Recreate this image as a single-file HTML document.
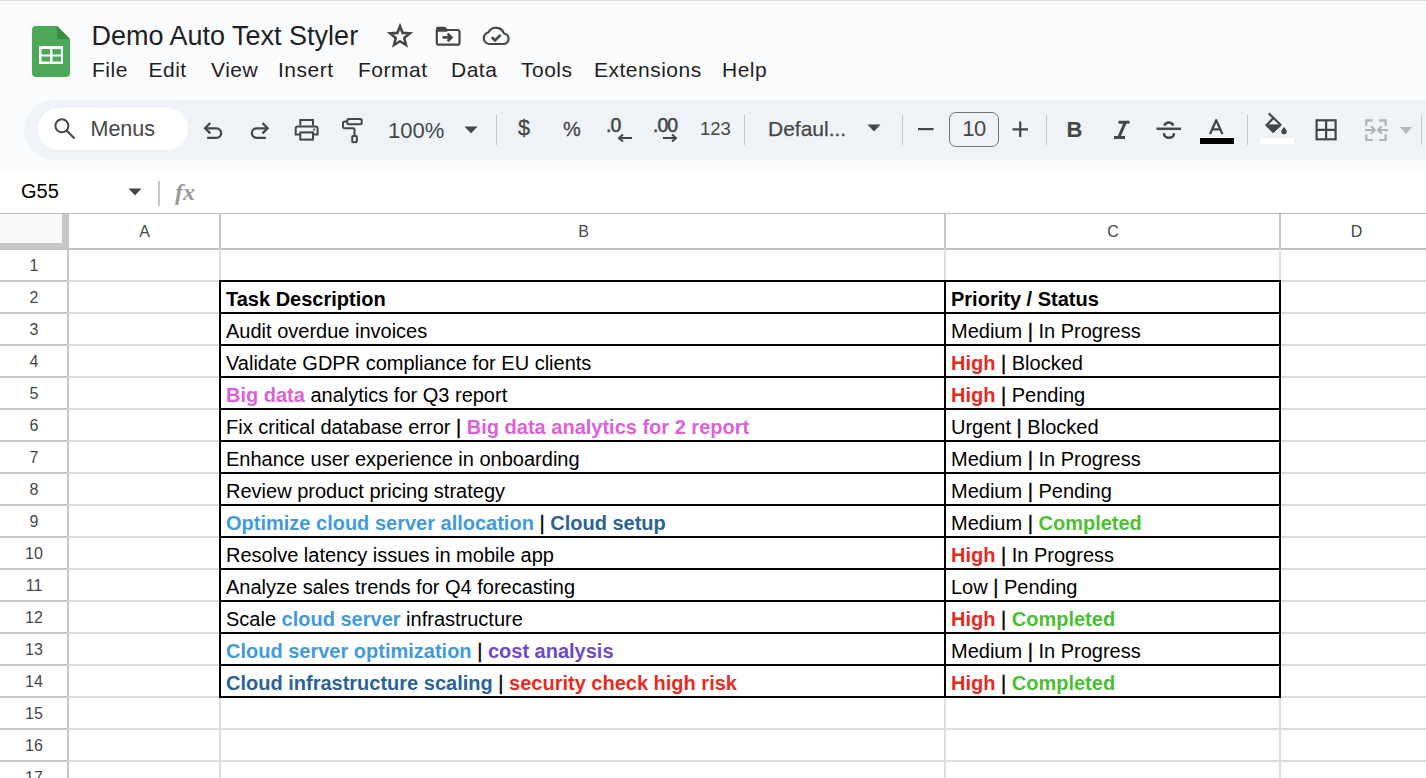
<!DOCTYPE html>
<html><head><meta charset="utf-8">
<style>
*{margin:0;padding:0;box-sizing:border-box}
html,body{width:1426px;height:778px;overflow:hidden;background:#fff;font-family:"Liberation Sans",sans-serif;position:relative}
.abs{position:absolute}
#top{position:absolute;left:0;top:0;width:1426px;height:172px;background:#f9fbfd}
#topline{position:absolute;left:0;top:0;width:1426px;height:1px;background:#dcdedb;box-shadow:0 1px 0 #fff}
.title{position:absolute;left:91.5px;top:20px;font-size:27px;color:#1f1f1f;white-space:nowrap;line-height:32px}
.menu{position:absolute;top:58px;font-size:21px;letter-spacing:0.5px;color:#1f1f1f;white-space:nowrap;line-height:24px}
#tb{position:absolute;left:24px;top:100px;width:1440px;height:60px;background:#eff3f8;border-radius:30px}
#search{position:absolute;left:38px;top:108px;width:150px;height:42px;background:#fff;border-radius:21px}
.tt{position:absolute;font-size:21px;color:#444746;white-space:nowrap;line-height:24px}
.sep{position:absolute;top:115px;width:1px;height:30px;background:#c7c7c7}
svg{position:absolute;overflow:visible}
#fbar{position:absolute;left:0;top:172px;width:1426px;height:41px;background:#fff}
.hdr{position:absolute;top:213px;height:36px;background:#fff}
.hl{position:absolute;left:68px;width:1358px;height:2px;background:#dedede}
.vl{position:absolute;top:249px;width:2px;height:529px;background:#dedede}
.rn{position:absolute;left:0;width:68px;height:32px;line-height:34px;text-align:center;font-size:16px;color:#444746}
.ct{position:absolute;height:32px;line-height:36px;font-size:20px;color:#000;white-space:nowrap}
.ct b{font-weight:bold}
.pp{-webkit-text-stroke:0.35px #000}
.r{color:#e62b23}.p{color:#da62d8}.lb{color:#439ad8}.db{color:#2c6394}.pu{color:#6c4cc2}.g{color:#4cbe34}
.ch{position:absolute;top:213px;height:36px;line-height:38px;text-align:center;font-size:16px;color:#444746}
</style></head><body>
<div id="top"></div>
<div id="topline"></div>

<!-- sheets logo -->
<svg style="left:32px;top:26px" width="38" height="51" viewBox="0 0 38 51">
  <path d="M4 0 H25 L38 13 V47 A4 4 0 0 1 34 51 H4 A4 4 0 0 1 0 47 V4 A4 4 0 0 1 4 0Z" fill="#4ea859"/>
  <path d="M25 0 L38 13 H25Z" fill="#3b8a3f"/>
  <rect x="7" y="20" width="24" height="18" fill="#fff"/>
  <rect x="9.5" y="23" width="8.5" height="5.5" fill="#4ea859"/>
  <rect x="20.5" y="23" width="8.5" height="5.5" fill="#4ea859"/>
  <rect x="9.5" y="30.5" width="8.5" height="5" fill="#4ea859"/>
  <rect x="20.5" y="30.5" width="8.5" height="5" fill="#4ea859"/>
</svg>

<div class="title">Demo Auto Text Styler</div>

<!-- star -->
<svg style="left:388px;top:24px" width="24" height="23" viewBox="0 0 24 23">
  <path d="M12 2.3 L14.6 8.9 L21.8 9.4 L16.3 14 L18 21 L12 17.2 L6 21 L7.7 14 L2.2 9.4 L9.4 8.9 Z" fill="none" stroke="#444746" stroke-width="2.6" stroke-linejoin="miter"/>
</svg>
<!-- folder move -->
<svg style="left:435px;top:26px" width="26" height="20" viewBox="0 0 26 20">
  <path d="M1.8 4 A2 2 0 0 1 3.8 2 H9.5 L11.5 4 H22.5 A2 2 0 0 1 24.5 6 V16.7 A2 2 0 0 1 22.5 18.7 H3.8 A2 2 0 0 1 1.8 16.7 Z" fill="none" stroke="#444746" stroke-width="2.2"/>
  <path d="M1 3 A2 2 0 0 1 3 0.8 H9.8 L12.3 3.2 V5.8 H1Z" fill="#444746"/>
  <path d="M7.5 11.4 H16 M12.6 7.6 L16.4 11.4 L12.6 15.2" fill="none" stroke="#444746" stroke-width="2.7"/>
</svg>
<!-- cloud check -->
<svg style="left:482px;top:26px" width="28" height="19" viewBox="0 0 28 19">
  <path d="M7 18 A6 6 0 0 1 6.5 6.2 A8.5 8.5 0 0 1 22 7.5 A5.3 5.3 0 0 1 22 18 Z" fill="none" stroke="#444746" stroke-width="2.2" stroke-linejoin="round"/>
  <path d="M9.8 11.3 L13 14.4 L18.6 8.8" fill="none" stroke="#444746" stroke-width="2.6"/>
</svg>

<div class="menu" style="left:92px">File</div>
<div class="menu" style="left:148.5px">Edit</div>
<div class="menu" style="left:211px">View</div>
<div class="menu" style="left:278px">Insert</div>
<div class="menu" style="left:358px">Format</div>
<div class="menu" style="left:451px">Data</div>
<div class="menu" style="left:521px">Tools</div>
<div class="menu" style="left:594px">Extensions</div>
<div class="menu" style="left:722px">Help</div>

<!-- toolbar -->
<div id="tb"></div>
<div id="search"></div>
<svg style="left:52px;top:117px" width="24" height="24" viewBox="0 0 24 24">
  <circle cx="9.9" cy="8.8" r="6.5" fill="none" stroke="#444746" stroke-width="2"/>
  <path d="M14.6 13.5 L22.5 21.5" stroke="#444746" stroke-width="2.2"/>
</svg>
<div class="tt" style="left:90.5px;top:117px;font-size:21.5px">Menus</div>

<!-- undo -->
<svg style="left:198px;top:115px" width="80" height="30" viewBox="198 115 80 30">
  <path d="M210.2 123 L205.1 128.2 L210.2 133.4" fill="none" stroke="#444746" stroke-width="2.3"/>
  <path d="M205.3 128.3 H216.4 A4.75 4.75 0 0 1 216.4 137.8 H207.2" fill="none" stroke="#444746" stroke-width="2.3"/>
  <path d="M262.5 123 L267.6 128.2 L262.5 133.4" fill="none" stroke="#444746" stroke-width="2.3"/>
  <path d="M267.4 128.3 H256.6 A4.75 4.75 0 0 0 256.6 137.8 H265.8" fill="none" stroke="#444746" stroke-width="2.3"/>
</svg>
<!-- print -->
<svg style="left:290px;top:115px" width="32" height="30" viewBox="290 115 32 30">
  <path d="M300.3 125.5 V120.1 H313 V125.5" fill="none" stroke="#444746" stroke-width="2"/>
  <path d="M300 134.6 H295.7 V128.4 A2 2 0 0 1 297.7 126.4 H315.6 A2 2 0 0 1 317.6 128.4 V134.6 H313.5" fill="none" stroke="#444746" stroke-width="2"/>
  <rect x="300.3" y="132.4" width="12.7" height="7.2" fill="none" stroke="#444746" stroke-width="2"/>
  <circle cx="314.2" cy="129.6" r="1.1" fill="#444746"/>
</svg>
<!-- paint format -->
<svg style="left:338px;top:115px" width="28" height="32" viewBox="338 115 28 32">
  <rect x="347.3" y="119" width="14.4" height="5.2" rx="1.5" fill="none" stroke="#444746" stroke-width="2"/>
  <path d="M347 121.5 H344.5 A1.5 1.5 0 0 0 343 123 V126.8 A1.5 1.5 0 0 0 344.5 128.3 H353 A1.5 1.5 0 0 1 354.5 129.8 V135" fill="none" stroke="#444746" stroke-width="2"/>
  <rect x="352.2" y="135.9" width="4.6" height="6.4" rx="1" fill="none" stroke="#444746" stroke-width="2"/>
</svg>
<div class="tt" style="left:388px;top:119px;font-size:22px">100%</div>
<svg style="left:464px;top:125.5px" width="14" height="8" viewBox="0 0 14 8"><path d="M0.5 0.5 H13.5 L7 7.5Z" fill="#444746"/></svg>
<div class="sep" style="left:496px"></div>

<div class="tt" style="left:518px;top:116px;font-size:21.5px;-webkit-text-stroke:0.3px #444746">$</div>
<div class="tt" style="left:563px;top:117px;font-size:20px;-webkit-text-stroke:0.3px #444746">%</div>
<div class="tt" style="left:606px;top:113px;font-size:19.5px;letter-spacing:-1px;-webkit-text-stroke:0.5px #444746">.0</div>
<svg style="left:617px;top:133px" width="16" height="10" viewBox="0 0 16 10"><path d="M15 5 H3 M6 1.5 L2 5 L6 8.5" fill="none" stroke="#444746" stroke-width="2"/></svg>
<div class="tt" style="left:653px;top:113px;font-size:19.5px;letter-spacing:-1px;-webkit-text-stroke:0.5px #444746">.00</div>
<svg style="left:662px;top:133px" width="16" height="10" viewBox="0 0 16 10"><path d="M1 5 H13 M10 1.5 L14 5 L10 8.5" fill="none" stroke="#444746" stroke-width="2"/></svg>
<div class="tt" style="left:700px;top:117px;font-size:18.5px">123</div>
<div class="sep" style="left:744px"></div>

<div class="tt" style="left:768px;top:117px;-webkit-text-stroke:0.25px #444746">Defaul...</div>
<svg style="left:867px;top:124px" width="14" height="8" viewBox="0 0 14 8"><path d="M0.5 0.5 H13.5 L7 7.5Z" fill="#444746"/></svg>
<div class="sep" style="left:902px"></div>

<svg style="left:918px;top:127.5px" width="16" height="3" viewBox="0 0 16 3"><rect x="0" y="0" width="15.5" height="2.2" fill="#444746"/></svg>
<div class="abs" style="left:949px;top:112px;width:50px;height:35px;border:1px solid #747775;border-radius:7px"></div>
<div class="tt" style="left:949px;top:117px;width:50px;text-align:center;font-size:22px;letter-spacing:-0.5px">10</div>
<svg style="left:1012px;top:121px" width="17" height="17" viewBox="0 0 17 17"><path d="M0.5 8.3 H16 M8.2 0.5 V16" stroke="#444746" stroke-width="2.2"/></svg>
<div class="sep" style="left:1046px"></div>

<div class="tt" style="left:1066.5px;top:118px;font-weight:bold;font-size:22px">B</div>
<svg style="left:1113px;top:120px" width="18" height="20" viewBox="0 0 18 20">
  <path d="M5.5 2.3 H16.5 M1 17.6 H12 M12.3 2.3 L5.7 17.6" fill="none" stroke="#444746" stroke-width="3"/>
</svg>
<!-- strike -->
<svg style="left:1156px;top:120px" width="26" height="20" viewBox="0 0 26 20">
  <path d="M0.5 8.8 H25" stroke="#444746" stroke-width="2.5"/>
  <path d="M8.4 5.6 A4.6 4.3 0 0 1 17.2 5.6" fill="none" stroke="#444746" stroke-width="2.6"/>
  <path d="M8 13.2 A5 4.6 0 0 0 18 13.2" fill="none" stroke="#444746" stroke-width="2.6"/>
</svg>
<svg style="left:1208px;top:118px" width="17" height="17" viewBox="0 0 17 17">
  <path d="M2 16 L8.2 2.2 L14.4 16 M4.4 11.3 H12" fill="none" stroke="#444746" stroke-width="2.3" stroke-linejoin="round"/>
</svg>
<div class="abs" style="left:1200px;top:138px;width:34px;height:6px;background:#000"></div>
<div class="sep" style="left:1247px"></div>
<!-- fill -->
<svg style="left:1255px;top:108px" width="40" height="30" viewBox="0 0 40 30">
  <path d="M13.8 5.4 L26 17.2" stroke="#444746" stroke-width="2.2"/>
  <path d="M18.2 10.2 L11.8 16.9 L18.2 23.5 L25.5 16.9" fill="none" stroke="#444746" stroke-width="2.2" stroke-linejoin="round"/>
  <path d="M10.6 16.9 H26.2 L18.2 24.8 Z" fill="#444746" stroke="#444746" stroke-width="1" stroke-linejoin="round"/>
  <path d="M29 19 C29 19 31.8 22 31.8 23.6 A2.8 2.8 0 0 1 26.2 23.6 C26.2 22 29 19 29 19Z" fill="#444746"/>
</svg>
<div class="abs" style="left:1260px;top:138px;width:34px;height:6px;background:#fff"></div>
<!-- borders -->
<svg style="left:1315px;top:119px" width="22" height="22" viewBox="0 0 22 22">
  <rect x="1.6" y="1.3" width="19" height="19" fill="none" stroke="#444746" stroke-width="2.2"/>
  <path d="M11.1 1 V21 M1 10.8 H21" stroke="#444746" stroke-width="2.2"/>
</svg>
<!-- merge -->
<svg style="left:1364px;top:119px" width="25" height="23" viewBox="0 0 25 23">
  <path d="M8.8 1.3 H2.3 V6.8 M2.3 15.3 V21 H8.8 M15.2 1.3 H21.6 V6.8 M21.6 15.3 V21 H15.2" fill="none" stroke="#b1b3b4" stroke-width="2.2"/>
  <path d="M1 11 H10.5 M7 7.3 L10.7 11 L7 14.7 M24 11 H14.3 M17.8 7.3 L14.1 11 L17.8 14.7" fill="none" stroke="#b1b3b4" stroke-width="2.2"/>
</svg>
<svg style="left:1400px;top:127px" width="12" height="7" viewBox="0 0 12 7"><path d="M0 0 H12 L6 7Z" fill="#b7b9bb"/></svg>
<div class="sep" style="left:1421px"></div>

<!-- formula bar -->
<div id="fbar"></div>
<div class="abs" style="left:21px;top:179px;font-size:20px;line-height:24px;color:#000">G55</div>
<svg style="left:128px;top:188px" width="14" height="8" viewBox="0 0 14 8"><path d="M0.5 0.5 H13.5 L7 7.5Z" fill="#444746"/></svg>
<div class="abs" style="left:158px;top:181px;width:2px;height:25px;background:#c7c7c7"></div>
<div class="abs" style="left:175px;top:178px;font-family:'Liberation Serif',serif;font-style:italic;font-weight:bold;font-size:24px;line-height:28px;color:#9a9a9a">fx</div>

<!-- column header -->
<div class="abs" style="left:0;top:213px;width:1426px;height:1px;background:#bdbdbd"></div>
<div class="abs" style="left:0;top:214px;width:62px;height:29px;background:#f8f9fa"></div>
<div class="abs" style="left:62px;top:214px;width:7px;height:36px;background:#c7c7c7"></div>
<div class="abs" style="left:0;top:243px;width:69px;height:6px;background:#c7c7c7"></div><div class="abs" style="left:0;top:249px;width:69px;height:1px;background:#bfc1bf"></div>
<div class="abs" style="left:69px;top:248px;width:1357px;height:2px;background:#bfc1bf"></div>
<div class="ch" style="left:69px;width:151px">A</div>
<div class="ch" style="left:221px;width:725px">B</div>
<div class="ch" style="left:945.5px;width:335px">C</div>
<div class="ch" style="left:1280px;width:153px">D</div>
<div class="abs" style="left:219px;top:214px;width:2px;height:35px;background:#c4c7c5"></div>
<div class="abs" style="left:944px;top:214px;width:2px;height:35px;background:#c4c7c5"></div>
<div class="abs" style="left:1279px;top:214px;width:2px;height:35px;background:#c4c7c5"></div>

<!-- row header right border -->
<div class="abs" style="left:67px;top:249px;width:2px;height:529px;background:#c4c7c5"></div>
<div class="abs" style="left:0;top:250px;width:67px;height:528px;background:#fff"></div>

<div class="hl" style="top:280px"></div>
<div class="hl" style="top:312px"></div>
<div class="hl" style="top:344px"></div>
<div class="hl" style="top:376px"></div>
<div class="hl" style="top:408px"></div>
<div class="hl" style="top:440px"></div>
<div class="hl" style="top:472px"></div>
<div class="hl" style="top:504px"></div>
<div class="hl" style="top:536px"></div>
<div class="hl" style="top:568px"></div>
<div class="hl" style="top:600px"></div>
<div class="hl" style="top:632px"></div>
<div class="hl" style="top:664px"></div>
<div class="hl" style="top:696px"></div>
<div class="hl" style="top:728px"></div>
<div class="hl" style="top:760px"></div>
<div class="hl" style="top:792px"></div>
<div class="vl" style="left:219px"></div>
<div class="vl" style="left:944px"></div>
<div class="vl" style="left:1279px"></div>
<div class="rn" style="top:249px">1</div>
<div class="rn" style="top:281px">2</div>
<div class="rn" style="top:313px">3</div>
<div class="rn" style="top:345px">4</div>
<div class="rn" style="top:377px">5</div>
<div class="rn" style="top:409px">6</div>
<div class="rn" style="top:441px">7</div>
<div class="rn" style="top:473px">8</div>
<div class="rn" style="top:505px">9</div>
<div class="rn" style="top:537px">10</div>
<div class="rn" style="top:569px">11</div>
<div class="rn" style="top:601px">12</div>
<div class="rn" style="top:633px">13</div>
<div class="rn" style="top:665px">14</div>
<div class="rn" style="top:697px">15</div>
<div class="rn" style="top:729px">16</div>
<div class="rn" style="top:761px">17</div>
<div class="ct" style="top:281px;left:226px"><b>Task Description</b></div>
<div class="ct" style="top:281px;left:951px"><b>Priority / Status</b></div>
<div class="ct" style="top:313px;left:226px">Audit overdue invoices</div>
<div class="ct" style="top:313px;left:951px">Medium <span class=pp>|</span> In Progress</div>
<div class="ct" style="top:345px;left:226px">Validate GDPR compliance for EU clients</div>
<div class="ct" style="top:345px;left:951px"><b class=r>High</b> <span class=pp>|</span> Blocked</div>
<div class="ct" style="top:377px;left:226px"><b class=p>Big data</b> analytics for Q3 report</div>
<div class="ct" style="top:377px;left:951px"><b class=r>High</b> <span class=pp>|</span> Pending</div>
<div class="ct" style="top:409px;left:226px">Fix critical database error <span class=pp>|</span> <b class=p>Big data analytics for 2 report</b></div>
<div class="ct" style="top:409px;left:951px">Urgent <span class=pp>|</span> Blocked</div>
<div class="ct" style="top:441px;left:226px">Enhance user experience in onboarding</div>
<div class="ct" style="top:441px;left:951px">Medium <span class=pp>|</span> In Progress</div>
<div class="ct" style="top:473px;left:226px">Review product pricing strategy</div>
<div class="ct" style="top:473px;left:951px">Medium <span class=pp>|</span> Pending</div>
<div class="ct" style="top:505px;left:226px"><b class=lb>Optimize cloud server allocation</b> <span class=pp>|</span> <b class=db>Cloud setup</b></div>
<div class="ct" style="top:505px;left:951px">Medium <span class=pp>|</span> <b class=g>Completed</b></div>
<div class="ct" style="top:537px;left:226px">Resolve latency issues in mobile app</div>
<div class="ct" style="top:537px;left:951px"><b class=r>High</b> <span class=pp>|</span> In Progress</div>
<div class="ct" style="top:569px;left:226px">Analyze sales trends for Q4 forecasting</div>
<div class="ct" style="top:569px;left:951px">Low <span class=pp>|</span> Pending</div>
<div class="ct" style="top:601px;left:226px">Scale <b class=lb>cloud server</b> infrastructure</div>
<div class="ct" style="top:601px;left:951px"><b class=r>High</b> <span class=pp>|</span> <b class=g>Completed</b></div>
<div class="ct" style="top:633px;left:226px"><b class=lb>Cloud server optimization</b> <span class=pp>|</span> <b class=pu>cost analysis</b></div>
<div class="ct" style="top:633px;left:951px">Medium <span class=pp>|</span> In Progress</div>
<div class="ct" style="top:665px;left:226px"><b class=db>Cloud infrastructure scaling</b> <span class=pp>|</span> <b class=r>security check high risk</b></div>
<div class="ct" style="top:665px;left:951px"><b class=r>High</b> <span class=pp>|</span> <b class=g>Completed</b></div>
<div class="abs" style="left:0;top:280px;width:68px;height:2px;background:#c4c7c5"></div>
<div class="abs" style="left:0;top:312px;width:68px;height:2px;background:#c4c7c5"></div>
<div class="abs" style="left:0;top:344px;width:68px;height:2px;background:#c4c7c5"></div>
<div class="abs" style="left:0;top:376px;width:68px;height:2px;background:#c4c7c5"></div>
<div class="abs" style="left:0;top:408px;width:68px;height:2px;background:#c4c7c5"></div>
<div class="abs" style="left:0;top:440px;width:68px;height:2px;background:#c4c7c5"></div>
<div class="abs" style="left:0;top:472px;width:68px;height:2px;background:#c4c7c5"></div>
<div class="abs" style="left:0;top:504px;width:68px;height:2px;background:#c4c7c5"></div>
<div class="abs" style="left:0;top:536px;width:68px;height:2px;background:#c4c7c5"></div>
<div class="abs" style="left:0;top:568px;width:68px;height:2px;background:#c4c7c5"></div>
<div class="abs" style="left:0;top:600px;width:68px;height:2px;background:#c4c7c5"></div>
<div class="abs" style="left:0;top:632px;width:68px;height:2px;background:#c4c7c5"></div>
<div class="abs" style="left:0;top:664px;width:68px;height:2px;background:#c4c7c5"></div>
<div class="abs" style="left:0;top:696px;width:68px;height:2px;background:#c4c7c5"></div>
<div class="abs" style="left:0;top:728px;width:68px;height:2px;background:#c4c7c5"></div>
<div class="abs" style="left:0;top:760px;width:68px;height:2px;background:#c4c7c5"></div>
<div class="abs" style="left:0;top:792px;width:68px;height:2px;background:#c4c7c5"></div>
<div class="abs" style="left:219px;top:312px;width:1062px;height:2px;background:#000"></div>
<div class="abs" style="left:219px;top:344px;width:1062px;height:2px;background:#000"></div>
<div class="abs" style="left:219px;top:376px;width:1062px;height:2px;background:#000"></div>
<div class="abs" style="left:219px;top:408px;width:1062px;height:2px;background:#000"></div>
<div class="abs" style="left:219px;top:440px;width:1062px;height:2px;background:#000"></div>
<div class="abs" style="left:219px;top:472px;width:1062px;height:2px;background:#000"></div>
<div class="abs" style="left:219px;top:504px;width:1062px;height:2px;background:#000"></div>
<div class="abs" style="left:219px;top:536px;width:1062px;height:2px;background:#000"></div>
<div class="abs" style="left:219px;top:568px;width:1062px;height:2px;background:#000"></div>
<div class="abs" style="left:219px;top:600px;width:1062px;height:2px;background:#000"></div>
<div class="abs" style="left:219px;top:632px;width:1062px;height:2px;background:#000"></div>
<div class="abs" style="left:219px;top:664px;width:1062px;height:2px;background:#000"></div>
<div class="abs" style="left:219px;top:696px;width:1062px;height:2px;background:#000"></div>
<div class="abs" style="left:944px;top:280px;width:2px;height:418px;background:#000"></div>

<!-- table borders -->
<div class="abs" style="left:219px;top:280px;width:1062px;height:418px;border:2px solid #000"></div>
</body></html>
